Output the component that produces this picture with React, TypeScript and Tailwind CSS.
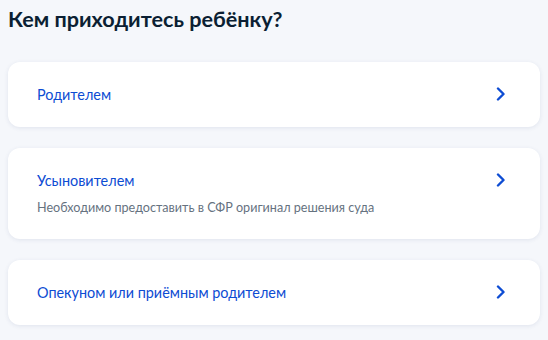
const options = [
  { title: "Родителем" },
  { title: "Усыновителем", note: "Необходимо предоставить в СФР оригинал решения суда" },
  { title: "Опекуном или приёмным родителем" },
];

function Chevron() {
  return (
    <svg width="10" height="14" viewBox="0 0 10 14" fill="none" className="mt-[3px] shrink-0">
      <path d="M2 1.5 7.5 7 2 12.5" stroke="#0d4cd3" strokeWidth="2.4" strokeLinecap="round" strokeLinejoin="round" />
    </svg>
  );
}

export default function App() {
  return (
    <div
      className="min-h-[340px] w-[548px] bg-[#f5f7fb] px-2 pt-[5px]"
      style={{ fontFamily: "Lato, 'Noto Sans', sans-serif" }}
    >
      <h1 className="text-[21.6px] leading-[28px] font-bold text-[#0b1f33]">Кем приходитесь ребёнку?</h1>

      <div className="mt-[29px] flex flex-col gap-[21px]">
        {options.map((o) => (
          <button
            key={o.title}
            className="flex w-[532px] items-start justify-between rounded-xl bg-white py-[22px] pl-[29px] pr-[34px] text-left shadow-[0_1px_4px_rgba(40,60,120,0.1)]"
          >
            <div className="flex flex-col gap-2">
              <span className="text-[14.4px] leading-[21px] text-[#0d4cd3]">{o.title}</span>
              {o.note && <span className="text-[12.6px] leading-[18px] text-[#66727f]">{o.note}</span>}
            </div>
            <Chevron />
          </button>
        ))}
      </div>
    </div>
  );
}
